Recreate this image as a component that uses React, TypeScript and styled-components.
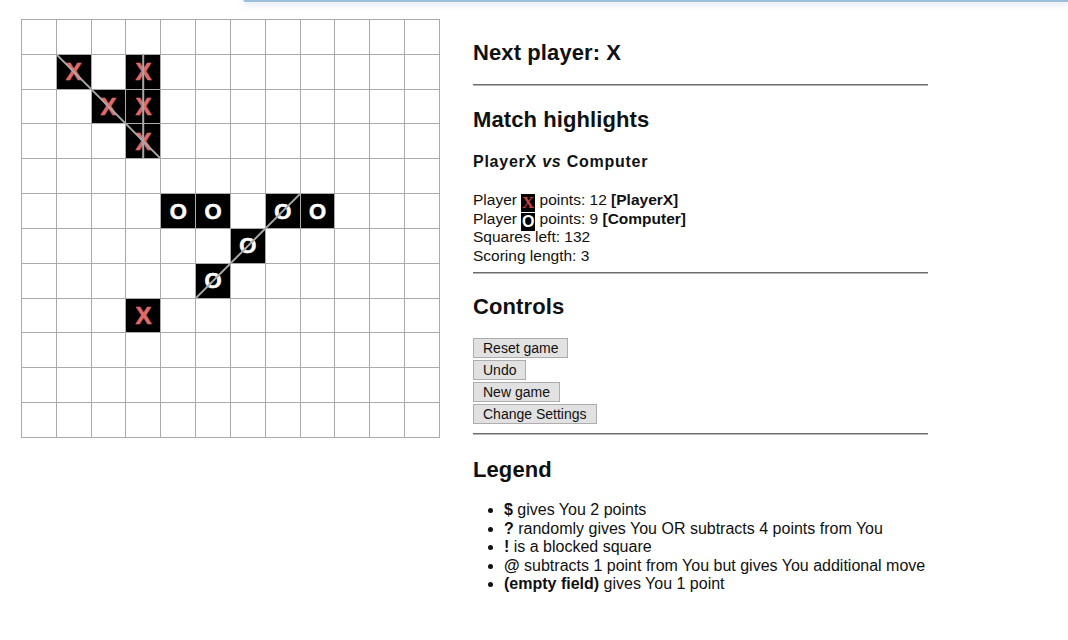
import React from "react";
import styled, { createGlobalStyle } from "styled-components";

const GlobalStyle = createGlobalStyle`
  html, body {
    margin: 0;
    padding: 0;
    background: #ffffff;
  }
  body {
    font-family: "Liberation Sans", Arial, sans-serif;
    color: #111111;
  }
`;

const TopEdge = styled.div`
  position: absolute;
  top: -1px;
  left: 243px;
  right: 0;
  height: 3px;
  background: #9dbfdc;
  border-bottom-left-radius: 4px;
  box-shadow: 0 2px 7px rgba(140, 170, 205, 0.45);
`;

const Page = styled.div`
  display: flex;
  align-items: flex-start;
  gap: 33px;
  padding: 19px 0 0 21px;
`;

const PITCH = 419 / 12;

const Board = styled.div`
  position: relative;
  display: grid;
  grid-template-columns: repeat(12, 1fr);
  grid-template-rows: repeat(12, 1fr);
  gap: 1px;
  padding: 1px;
  width: 419px;
  height: 419px;
  box-sizing: border-box;
  background: #aaaaaa;
  flex: none;
`;

const Cell = styled.div<{ $mark: string }>`
  display: flex;
  align-items: center;
  justify-content: center;
  background: ${(p) => (p.$mark ? "#000000" : "#ffffff")};
  color: ${(p) => (p.$mark === "X" ? "#e06a6a" : "#ffffff")};
  font-family: "Liberation Sans", Arial, sans-serif;
  font-weight: bold;
  font-size: ${(p) => (p.$mark === "X" ? "24px" : "22px")};
  line-height: 1;
  padding-top: 1px;
  user-select: none;
  -webkit-text-stroke: ${(p) => (p.$mark ? "0.6px currentColor" : "0")};
`;

const StrikeLayer = styled.svg`
  position: absolute;
  left: 0;
  top: 0;
  width: 419px;
  height: 419px;
  pointer-events: none;
`;

const Panel = styled.div`
  display: flex;
  flex-direction: column;
  width: 455px;
`;

const Title = styled.h2<{ $top: number }>`
  margin: ${(p) => p.$top}px 0 0;
  font-size: 22px;
  line-height: 26px;
  font-weight: bold;
  letter-spacing: 0.1px;
`;

const Rule = styled.hr<{ $top: number }>`
  margin: ${(p) => p.$top}px 0 0;
  height: 0;
  border: none;
  border-top: 1px solid #6e6e6e;
  border-bottom: 1px solid #b5b5b5;
`;

const Subtitle = styled.h3`
  margin: 19px 0 0;
  font-size: 16px;
  line-height: 20px;
  font-weight: bold;
  letter-spacing: 0.75px;
  em {
    font-style: italic;
  }
`;

const Stats = styled.div`
  margin-top: 19px;
  font-size: 15.5px;
  line-height: 18.6px;
`;

const StatLine = styled.div`
  height: 18.6px;
  white-space: nowrap;
`;

const Badge = styled.span<{ $kind: "X" | "O" }>`
  display: inline-block;
  width: 14px;
  height: 18px;
  background: #000000;
  color: ${(p) => (p.$kind === "X" ? "#c94040" : "#ffffff")};
  font-family: ${(p) =>
    p.$kind === "X"
      ? `"Liberation Serif", "Times New Roman", serif`
      : `"Liberation Sans", Arial, sans-serif`};
  font-weight: bold;
  font-size: ${(p) => (p.$kind === "X" ? "17px" : "16px")};
  line-height: 18px;
  text-align: center;
  vertical-align: -3px;
`;

const ButtonStack = styled.div`
  margin-top: 18px;
  display: flex;
  flex-direction: column;
  align-items: flex-start;
  gap: 2px;
`;

const Button = styled.button`
  height: 20px;
  padding: 0 9px;
  margin: 0;
  background: #e1e1e1;
  border: 1px solid #adadad;
  border-radius: 0;
  font-family: "Liberation Sans", Arial, sans-serif;
  font-size: 14px;
  line-height: 18px;
  color: #111111;
  cursor: pointer;
`;

const LegendList = styled.ul`
  margin: 18px 0 0;
  padding-left: 31px;
  font-size: 16px;
  line-height: 18.5px;
  list-style: disc;
  li {
    white-space: nowrap;
  }
`;

const marks: Record<string, string> = {
  "1-1": "X",
  "1-3": "X",
  "2-2": "X",
  "2-3": "X",
  "3-3": "X",
  "5-4": "O",
  "5-5": "O",
  "5-7": "O",
  "5-8": "O",
  "6-6": "O",
  "7-5": "O",
  "8-3": "X",
};

const strikes = [
  { x1: 1, y1: 1, x2: 4, y2: 4 },
  { x1: 3.5, y1: 1, x2: 3.5, y2: 4 },
  { x1: 5, y1: 8, x2: 8, y2: 5 },
];

export default function App() {
  const cells = [];
  for (let r = 0; r < 12; r++) {
    for (let c = 0; c < 12; c++) {
      const m = marks[`${r}-${c}`] || "";
      cells.push(
        <Cell key={`${r}-${c}`} $mark={m}>
          {m}
        </Cell>
      );
    }
  }

  return (
    <>
      <GlobalStyle />
      <TopEdge />
      <Page>
        <Board>
          {cells}
          <StrikeLayer viewBox="0 0 419 419">
            {strikes.map((s, i) => (
              <line
                key={i}
                x1={s.x1 * PITCH}
                y1={s.y1 * PITCH}
                x2={s.x2 * PITCH}
                y2={s.y2 * PITCH}
                stroke="#a8a8a8"
                strokeWidth={2}
              />
            ))}
          </StrikeLayer>
        </Board>
        <Panel>
          <Title $top={21}>Next player: X</Title>
          <Rule $top={18} />
          <Title $top={21}>Match highlights</Title>
          <Subtitle>
            PlayerX <em>vs</em> Computer
          </Subtitle>
          <Stats>
            <StatLine>
              Player <Badge $kind="X">X</Badge> points: 12 <b>[PlayerX]</b>
            </StatLine>
            <StatLine>
              Player <Badge $kind="O">O</Badge> points: 9 <b>[Computer]</b>
            </StatLine>
            <StatLine>Squares left: 132</StatLine>
            <StatLine>Scoring length: 3</StatLine>
          </Stats>
          <Rule $top={7} />
          <Title $top={20}>Controls</Title>
          <ButtonStack>
            <Button>Reset game</Button>
            <Button>Undo</Button>
            <Button>New game</Button>
            <Button>Change Settings</Button>
          </ButtonStack>
          <Rule $top={9} />
          <Title $top={22}>Legend</Title>
          <LegendList>
            <li>
              <b>$</b> gives You 2 points
            </li>
            <li>
              <b>?</b> randomly gives You OR subtracts 4 points from You
            </li>
            <li>
              <b>!</b> is a blocked square
            </li>
            <li>
              <b>@</b> subtracts 1 point from You but gives You additional move
            </li>
            <li>
              <b>(empty field)</b> gives You 1 point
            </li>
          </LegendList>
        </Panel>
      </Page>
    </>
  );
}
